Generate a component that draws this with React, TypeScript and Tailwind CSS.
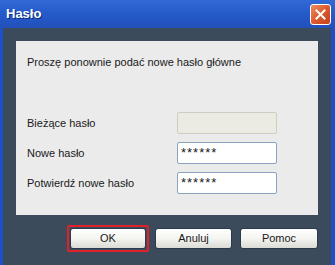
import React from 'react';

const font = { fontFamily: '"Liberation Sans", Arial, sans-serif' };

export default function App() {
  return (
    <div className="w-[335px] h-[265px] flex flex-col bg-[#1d50c8] text-[11px] text-[#1a1a1a]" style={font}>
      <TitleBar />
      <div className="flex-1 flex flex-col ml-[3px] mr-[4px] bg-[#3c4b5c] px-[13px] pt-[13px]">
        <div className="h-[174px] bg-[#ebebeb] pl-[11px] flex flex-col">
          <p className="mt-[14px] h-[14px] leading-[14px]">Proszę ponownie podać nowe hasło główne</p>
          <div className="mt-[43px] flex flex-col gap-[8px]">
            <FieldRow label="Bieżące hasło" disabled />
            <FieldRow label="Nowe hasło" value="******" />
            <FieldRow label="Potwierdź nowe hasło" value="******" />
          </div>
        </div>
        <div className="flex justify-end items-center mt-[10px]">
          <div className="border-2 border-[#e0202a] rounded-[2px] p-[1px]">
            <XpButton label="OK" w="w-[76px]" />
          </div>
          <div className="ml-[6px]">
            <XpButton label="Anuluj" w="w-[77px]" />
          </div>
          <div className="ml-[8px]">
            <XpButton label="Pomoc" w="w-[78px]" />
          </div>
        </div>
      </div>
    </div>
  );
}

function TitleBar() {
  return (
    <div className="h-[28px] flex items-center justify-between pl-[6px] pr-[4px] bg-gradient-to-b from-[#3169d6] via-[#255ac9] to-[#2250bb]">
      <span className="text-white font-bold text-[13px] [text-shadow:1px_1px_0_#0b2a78]">Hasło</span>
      <div className="w-[21px] h-[21px] rounded-[3px] border border-white bg-gradient-to-br from-[#ec8c62] via-[#dc5a2c] to-[#c63f1a] flex items-center justify-center">
        <svg width="11" height="11" viewBox="0 0 11 11">
          <path d="M1.5 1.5 L9.5 9.5 M9.5 1.5 L1.5 9.5" stroke="white" strokeWidth="2" strokeLinecap="square" />
        </svg>
      </div>
    </div>
  );
}

function FieldRow({ label, value, disabled }: { label: string; value?: string; disabled?: boolean }) {
  return (
    <div className="flex items-center h-[22px]">
      <span className="w-[150px]">{label}</span>
      <div
        className={
          disabled
            ? 'w-[100px] h-[22px] rounded-[2px] border border-[#cfcdc0] bg-[#ecebe3]'
            : 'w-[100px] h-[22px] rounded-[2px] border border-[#8da2bf] bg-white pl-[3px] flex items-center text-[13px] tracking-[1px]'
        }
      >
        {value}
      </div>
    </div>
  );
}

function XpButton({ label, w }: { label: string; w: string }) {
  return (
    <div
      className={`${w} h-[21px] rounded-[3px] border border-[#2b3a4c] bg-gradient-to-b from-white via-[#f4f4f0] to-[#dcdcd6] flex items-center justify-center text-[11px] font-normal text-[#1a1a1a]`}
    >
      {label}
    </div>
  );
}
